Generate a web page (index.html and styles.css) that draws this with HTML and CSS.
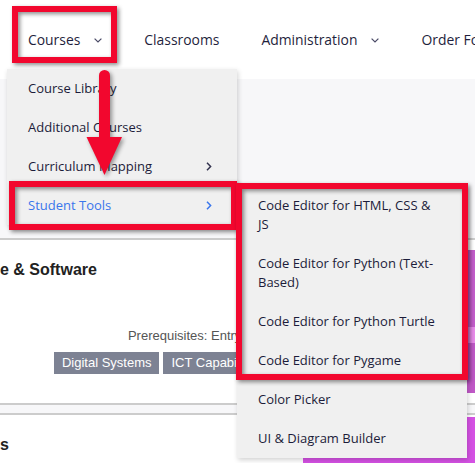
FILE: index.html
```html
<!DOCTYPE html>
<html lang="en">
<head>
<meta charset="utf-8">
<title>Courses menu</title>
<link rel="stylesheet" href="styles.css">
</head>
<body>
<header class="topbar">
  <nav class="nav">
    <a class="nav-item">Courses
      <svg class="chev-down" viewBox="0 0 8 5" width="8" height="5"><path d="M0.6 0.6 L4 4 L7.4 0.6" fill="none" stroke="#4a4a66" stroke-width="1.2"/></svg>
    </a>
    <a class="nav-item">Classrooms</a>
    <a class="nav-item">Administration
      <svg class="chev-down" viewBox="0 0 8 5" width="8" height="5"><path d="M0.6 0.6 L4 4 L7.4 0.6" fill="none" stroke="#4a4a66" stroke-width="1.2"/></svg>
    </a>
    <a class="nav-item">Order Forms</a>
  </nav>
</header>

<main class="content">
  <section class="card card-first">
    <div class="card-body">
      <h3 class="card-title">e &amp; Software</h3>
      <div class="card-meta">
        <p class="prereq">Prerequisites: Entry Year</p>
        <div class="badges">
          <span class="badge">Digital Systems</span>
          <span class="badge">ICT Capabilities</span>
        </div>
      </div>
    </div>
    <div class="thumb thumb-one"></div>
  </section>
  <section class="card card-second">
    <div class="card-body">
      <h3 class="card-title">s</h3>
    </div>
    <div class="thumb thumb-two"></div>
  </section>
</main>

<div class="dropdown">
  <div class="menu-item">Course Library</div>
  <div class="menu-item">Additional Courses</div>
  <div class="menu-item">Curriculum Mapping
    <svg class="chev-right" viewBox="0 0 6 9" width="6" height="9"><path d="M1 0.8 L4.6 4.5 L1 8.2" fill="none" stroke="#34344f" stroke-width="1.5"/></svg>
  </div>
  <div class="menu-item menu-item-active">Student Tools
    <svg class="chev-right" viewBox="0 0 6 9" width="6" height="9"><path d="M1 0.8 L4.6 4.5 L1 8.2" fill="none" stroke="#3a76ec" stroke-width="1.5"/></svg>
  </div>
</div>

<div class="submenu">
  <div class="menu-item">Code Editor for HTML, CSS &amp; JS</div>
  <div class="menu-item">Code Editor for Python (Text-Based)</div>
  <div class="menu-item">Code Editor for Python Turtle</div>
  <div class="menu-item">Code Editor for Pygame</div>
  <div class="menu-item">Color Picker</div>
  <div class="menu-item">UI &amp; Diagram Builder</div>
</div>

<div class="annot annot-courses"></div>
<div class="annot annot-tools"></div>
<div class="annot annot-sub"></div>

<svg class="arrow" viewBox="0 0 40 112" width="40" height="112">
  <rect x="14" y="2" width="11" height="72" rx="5.5" fill="#f2072e"/>
  <polygon points="1.5,69 37,69 19.5,107" fill="#f2072e"/>
</svg>
</body>
</html>
```

FILE: styles.css
```css
* {
  box-sizing: border-box;
}

html,
body {
  margin: 0;
  padding: 0;
}

body {
  position: relative;
  width: 475px;
  height: 463px;
  overflow: hidden;
  background: #f7f7f9;
  font-family: "Open Sans", "Noto Sans", sans-serif;
}

/* top navigation */
.topbar {
  height: 79px;
  background: #ffffff;
}

.nav {
  display: flex;
  align-items: center;
  height: 79px;
  padding-left: 7px;
  overflow: hidden;
}

.nav-item {
  display: flex;
  align-items: center;
  flex-shrink: 0;
  padding: 0 21px;
  font-size: 13.9px;
  color: #1f1f3d;
  white-space: nowrap;
}

.chev-down {
  margin-left: 14px;
  margin-top: 1px;
}

/* page content */
.content {
  padding-top: 159px;
}

.card {
  display: grid;
  grid-template-columns: 303px 1fr;
  background: #ffffff;
  border-top: 2px solid #cccccc;
  border-bottom: 2px solid #cccccc;
}

.card-first {
  height: 167px;
}

.card-second {
  margin-top: 8px;
  height: 80px;
}

.card-body {
  padding-top: 21px;
  font-family: "Liberation Sans", Arial, sans-serif;
}

.card-title {
  margin: 0;
  font-size: 16px;
  line-height: 18px;
  font-weight: bold;
  color: #222222;
}

.card-meta {
  display: flex;
  flex-direction: column;
  align-items: flex-end;
  padding-right: 32px;
  margin-top: 49px;
}

.prereq {
  margin: 0;
  font-size: 13px;
  line-height: 15px;
  color: #555555;
  white-space: nowrap;
}

.badges {
  display: flex;
  gap: 4px;
  margin-top: 9px;
}

.badge {
  height: 22px;
  padding: 0 8px;
  font-size: 13px;
  line-height: 22px;
  color: #ffffff;
  background: #7d8293;
  white-space: nowrap;
}

.thumb-one {
  margin-top: 10px;
  height: 143px;
  background: linear-gradient(to bottom, #c35dca 0, #c35dca 77px, #e88be9 77px, #e88be9 93px, #bf58c6 93px);
}

.thumb-two {
  margin-top: 2px;
  height: 80px;
  background: #d451e3;
}

/* dropdown menus */
.dropdown,
.submenu {
  position: absolute;
  width: 230px;
  background: #f0f0f0;
  box-shadow: 1px 2px 5px rgba(0, 0, 0, 0.18);
}

.dropdown {
  left: 7px;
  top: 69px;
}

.submenu {
  left: 237px;
  top: 186px;
}

.menu-item {
  display: flex;
  align-items: center;
  justify-content: space-between;
  padding: 10px 20px 10px 21px;
  font-size: 13px;
  line-height: 19px;
  color: #1c1c3a;
}

.dropdown .menu-item {
  padding-right: 25px;
}

.submenu .menu-item {
  padding-right: 29px;
}

.menu-item-active {
  color: #3a76ec;
}

/* annotations */
.annot {
  position: absolute;
  border: 6px solid #f2072e;
  filter: drop-shadow(2px 2px 2px rgba(0, 0, 0, 0.45));
}

.annot-courses {
  left: 12px;
  top: 6px;
  width: 105px;
  height: 57px;
}

.annot-tools {
  left: 9px;
  top: 181px;
  width: 228px;
  height: 49px;
}

.annot-sub {
  left: 236px;
  top: 183px;
  width: 232px;
  height: 197px;
}

.arrow {
  position: absolute;
  left: 85px;
  top: 68px;
  filter: drop-shadow(2px 2px 2px rgba(0, 0, 0, 0.4));
}
```
